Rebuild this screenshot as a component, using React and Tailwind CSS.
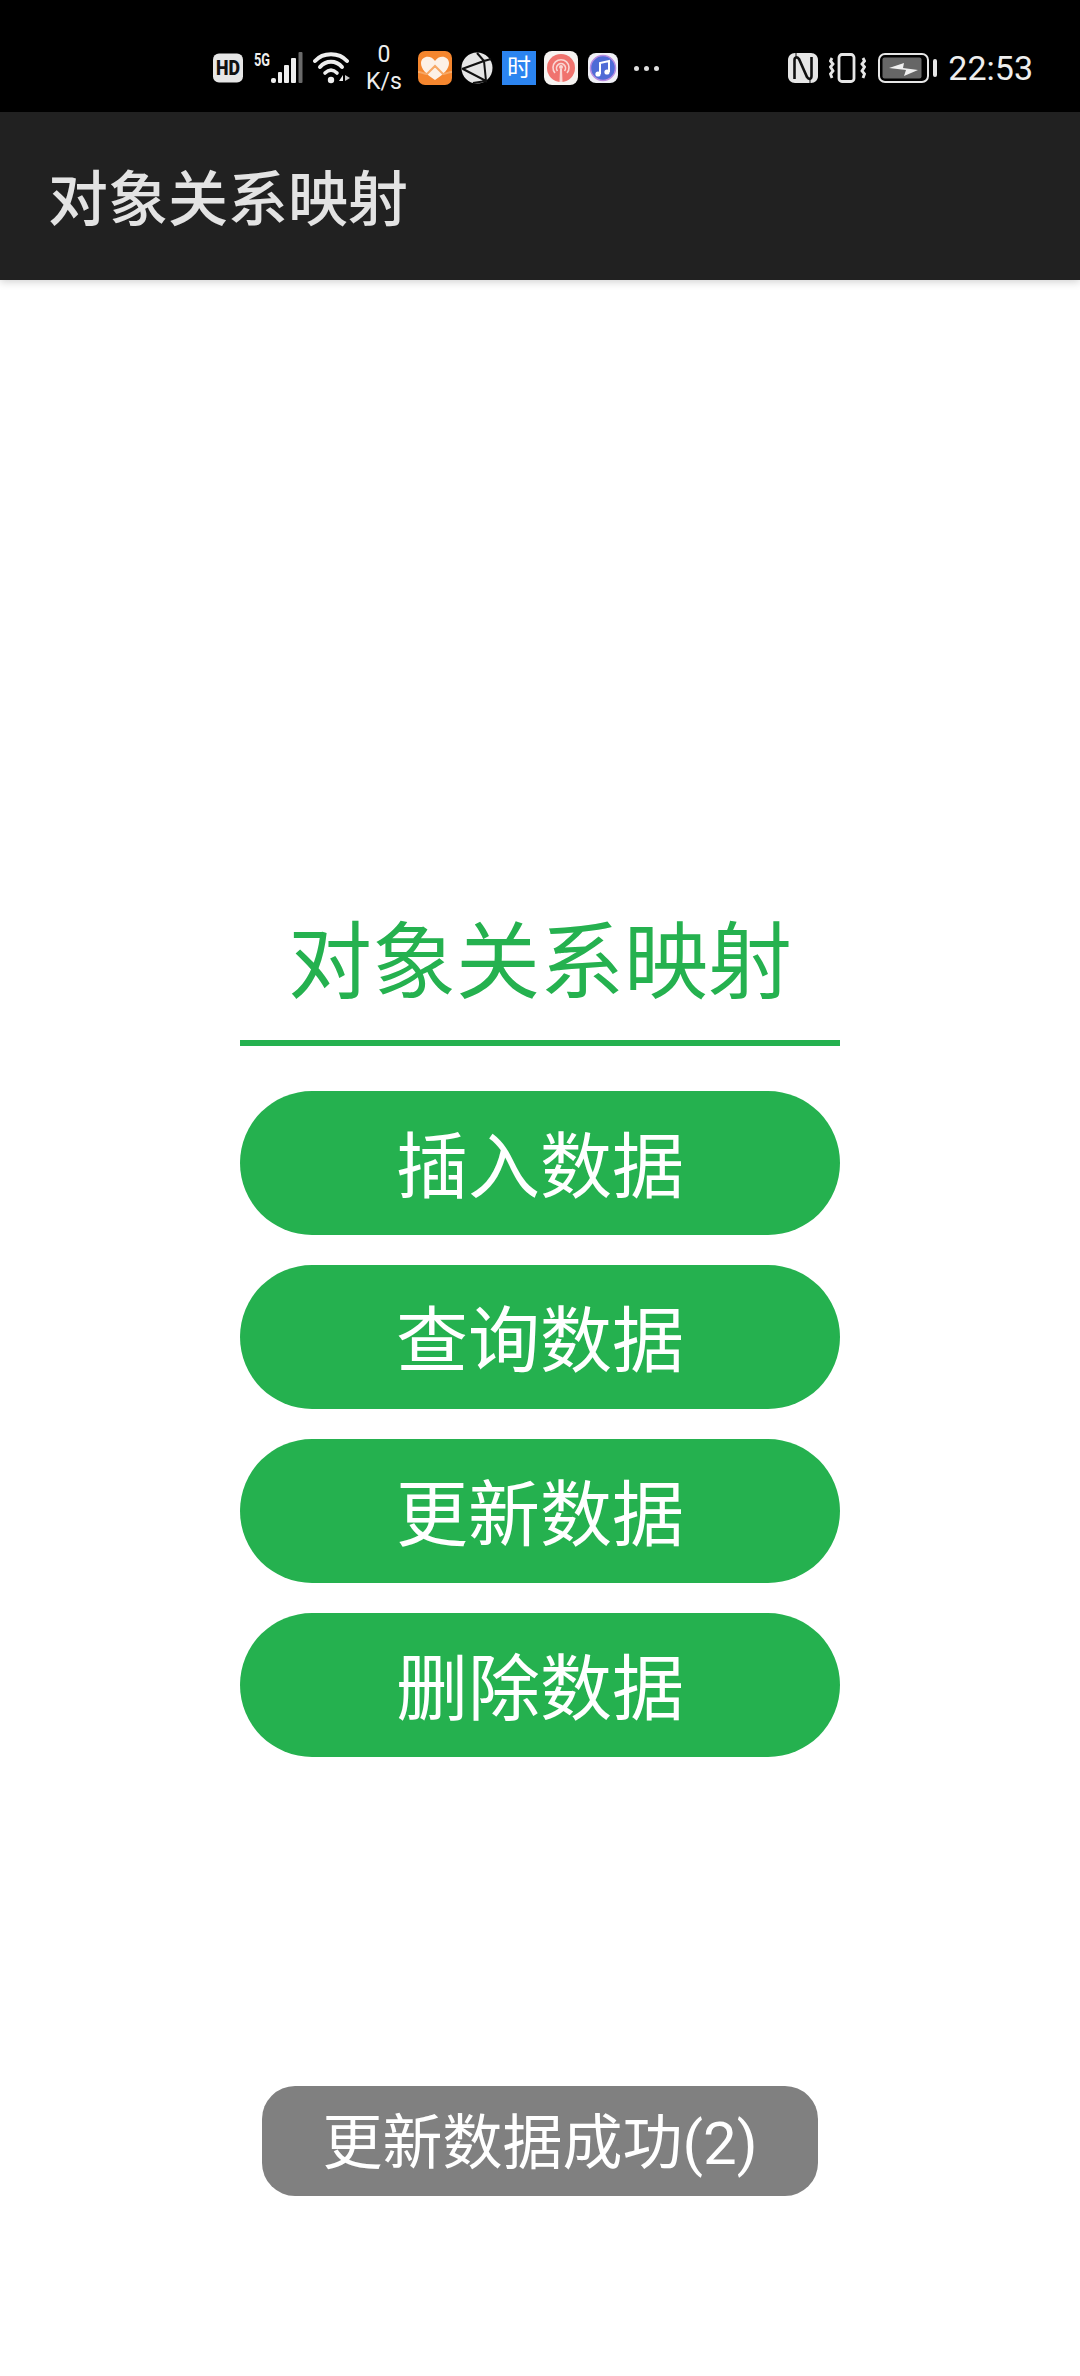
import React from 'react';

const CJK = 'font-["Roboto","Noto_Sans_CJK_SC",sans-serif]';

const HdIcon = () => (
  <svg width="30" height="30" viewBox="0 0 30 30" className="ml-[213px]">
    <rect x="0" y="0.500" width="30" height="29" rx="6" fill="#e6e6e6" />
    <text x="15" y="22" textAnchor="middle" fontSize="20" fontWeight="900" fill="#111" fontFamily="Roboto" textLength="24" lengthAdjust="spacingAndGlyphs">HD</text>
  </svg>
);

const SignalIcon = () => (
  <svg width="49" height="32" viewBox="0 0 49 32" className="ml-[11px] overflow-visible">
    <text x="0" y="14" fontSize="18" fontWeight="700" fill="#eee" fontFamily="Roboto" textLength="16" lengthAdjust="spacingAndGlyphs">5G</text>
    <rect x="17" y="26" width="5" height="5" rx="2" fill="#eee" />
    <rect x="24" y="20" width="4" height="11" rx="1" fill="#eee" />
    <rect x="30" y="13" width="5" height="18" rx="1" fill="#eee" />
    <rect x="37" y="6" width="5" height="25" rx="1" fill="#eee" />
    <rect x="44.500" y="0" width="4" height="31" rx="1" fill="#6a6a6a" />
  </svg>
);

const WifiIcon = () => (
  <svg width="38" height="32" viewBox="0 0 38 32" fill="none" className="ml-[10px]">
    <path d="M2 9 C10 0 26 0 34 9" stroke="#eee" strokeWidth="4" strokeLinecap="round" />
    <path d="M7 15 C13 8 23 8 29 15" stroke="#eee" strokeWidth="4" strokeLinecap="round" />
    <path d="M12 21 C16 17 20 17 24 21" stroke="#eee" strokeWidth="3.600" strokeLinecap="round" />
    <circle cx="18" cy="28" r="3.200" fill="#eee" />
    <path d="M26 29 L30 23 L30 29 Z" fill="#eee" />
    <path d="M32 23 L37 26 L32 29 Z" fill="#ccc" />
  </svg>
);

const HealthIcon = () => (
  <svg width="34" height="34" viewBox="0 0 34 34" className="ml-[14px]">
    <rect width="34" height="34" rx="7" fill="#f5862e" />
    <path d="M17 29 C8 23 3 18 3 12 C3 5 13 3 17 10 C21 3 31 5 31 12 C31 18 26 23 17 29 Z" fill="#fdf1e6" />
    <path d="M0 21 C4 21 6 23 9 23 L17 15 L25 23 C28 23 30 21 34 21" stroke="#f7a865" strokeWidth="2" fill="none" />
  </svg>
);

const BallIcon = () => (
  <svg width="32" height="32" viewBox="0 0 32 32" className="ml-[9px]">
    <circle cx="16" cy="16" r="15.500" fill="#e6e6e6" />
    <path d="M1 17 L23 9 L25 29 L2 17 M23 9 L16 1 M23 9 L30 7 M25 29 L12 31" stroke="#111" strokeWidth="2" fill="none" />
  </svg>
);

const TimeIcon = () => (
  <div className="ml-[9px] w-[34px] h-[34px] bg-[#2b84f0] flex items-center justify-center">
    <span className={`${CJK} text-[24px] leading-none text-white`}>时</span>
  </div>
);

const PodcastIcon = () => (
  <svg width="34" height="34" viewBox="0 0 34 34" className="ml-[8px]">
    <rect width="34" height="34" rx="8" fill="#f6f3f1" />
    <circle cx="17" cy="17" r="14" fill="#f0736e" />
    <path d="M11 22 A8 8 0 1 1 23 22" stroke="#f9d7d4" strokeWidth="1.600" fill="none" />
    <path d="M13.500 20 A4.500 4.500 0 1 1 20.500 20" stroke="#f9d7d4" strokeWidth="1.600" fill="none" />
    <circle cx="17" cy="16" r="2" fill="#f9d7d4" />
    <path d="M16 18 H18 L18.500 31 H15.500 Z" fill="#f9d7d4" />
  </svg>
);

const MusicIcon = () => (
  <svg width="30" height="30" viewBox="0 0 30 30" className="ml-[10px]">
    <rect width="30" height="30" rx="8" fill="#f0f0f6" />
    <circle cx="15" cy="15" r="12.500" fill="#4f6bd6" stroke="#b88be0" strokeWidth="1.500" />
    <path d="M12 21 V10 L21 8 V19" stroke="#fff" strokeWidth="2" fill="none" />
    <circle cx="10" cy="21" r="2.600" fill="#fff" />
    <circle cx="19" cy="19" r="2.600" fill="#fff" />
  </svg>
);

const NfcIcon = () => (
  <svg width="30" height="30" viewBox="0 0 30 30">
    <path d="M7 0 H23 C27 0 30 3 30 7 V23 C30 27 27 30 23 30 H7 C3 30 0 27 0 23 V7 C0 3 3 0 7 0 Z" fill="#e6e6e6" />
    <path d="M6.500 26 V7 C6.500 4 9 3.500 11 6 L19 24 C21 27 23.500 26 23.500 23 V4" stroke="#111" strokeWidth="2.600" fill="none" />
    <path d="M8 0 V4 M22 30 V26" stroke="#111" strokeWidth="1" />
  </svg>
);

const VibrateIcon = () => (
  <svg width="37" height="30" viewBox="0 0 37 30" fill="none" stroke="#e6e6e6" strokeWidth="2.800" className="ml-[11px]">
    <rect x="10" y="1.500" width="15" height="27" rx="3" />
    <path d="M3 5 L1.500 8 L4 11 L1.500 14 L4 18 L1.500 21 L3 25" />
    <path d="M34 5 L35.500 8 L33 11 L35.500 14 L33 18 L35.500 21 L34 25" />
  </svg>
);

const BatteryIcon = () => (
  <svg width="59" height="30" viewBox="0 0 59 30" fill="none" className="ml-[12px]">
    <rect x="1" y="1" width="49" height="28" rx="6" stroke="#e6e6e6" strokeWidth="2" />
    <rect x="4.500" y="4.500" width="39" height="21" rx="2" fill="#666" />
    <path d="M11 15 L26 10 L25 15 L40 17 L26 23 L28 17 Z" fill="#f0f0f0" />
    <rect x="55" y="6" width="4" height="18" rx="2" fill="#e6e6e6" />
  </svg>
);

const StatusBar = () => (
  <div className="h-[112px] bg-black flex items-center pt-[24px]">
    <HdIcon />
    <SignalIcon />
    <WifiIcon />
    <div className="w-[40px] ml-[13px] flex flex-col items-center font-['Roboto'] text-[23px] leading-[27px] text-[#eeeeee]">
      <span>0</span>
      <span>K/s</span>
    </div>
    <HealthIcon />
    <BallIcon />
    <TimeIcon />
    <PodcastIcon />
    <MusicIcon />
    <div className="ml-[16px] flex gap-[5px]">
      <span className="w-[5px] h-[5px] rounded-full bg-[#dddddd]" />
      <span className="w-[5px] h-[5px] rounded-full bg-[#dddddd]" />
      <span className="w-[5px] h-[5px] rounded-full bg-[#dddddd]" />
    </div>
    <div className="ml-auto flex items-center mr-[47px]">
      <NfcIcon />
      <VibrateIcon />
      <BatteryIcon />
      <span className="ml-[11px] font-['Roboto'] text-[34px] leading-none text-[#eeeeee]">22:53</span>
    </div>
  </div>
);

const ActionButton = ({ label }) => (
  <button className={`w-full h-[144px] rounded-[72px] bg-[#25b14f] text-white text-[72px] leading-none pt-[9px] ${CJK}`}>
    {label}
  </button>
);

export default function App() {
  return (
    <div className="relative h-[2376px] w-[1080px] bg-white overflow-hidden">
      <StatusBar />
      <div className="h-[168px] bg-[#212121] flex items-center pl-[48px] pt-[9px] shadow-[0_2px_8px_rgba(0,0,0,0.18)] relative">
        <span className={`${CJK} text-[60px] font-medium leading-none text-[#e3e3e3]`}>对象关系映射</span>
      </div>

      <div className="mx-auto w-[600px] pt-[628px] flex flex-col">
        <div className={`${CJK} h-[132px] text-center text-[84px] leading-[112px] text-[#25b14f]`}>对象关系映射</div>
        <div className="h-[6px] bg-[#25b14f]" />
        <div className="flex flex-col gap-[30px] mt-[45px]">
          <ActionButton label="插入数据" />
          <ActionButton label="查询数据" />
          <ActionButton label="更新数据" />
          <ActionButton label="删除数据" />
        </div>
      </div>

      <div className={`${CJK} absolute left-[262px] top-[2086px] w-[556px] h-[110px] rounded-[33px] bg-[#808080] text-white text-[60px] flex items-center justify-center pt-[6px]`}>
        更新数据成功(2)
      </div>
    </div>
  );
}
